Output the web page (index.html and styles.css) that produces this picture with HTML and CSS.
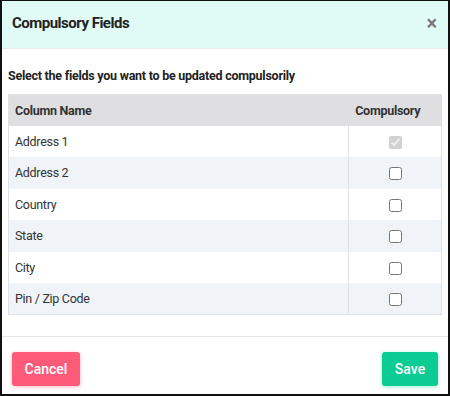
FILE: index.html
```html
<!DOCTYPE html>
<html>
<head>
<meta charset="utf-8">
<link rel="stylesheet" href="styles.css">
</head>
<body>
<div class="modal">
  <div class="modal-header">
    <h2 class="title">Compulsory Fields</h2>
    <span class="close">&times;</span>
  </div>
  <div class="modal-body">
    <p class="lead">Select the fields you want to be updated compulsorily</p>
    <table class="fields">
      <thead>
        <tr><th class="name">Column Name</th><th class="chk">Compulsory</th></tr>
      </thead>
      <tbody>
        <tr><td class="name">Address 1</td><td class="chk"><input type="checkbox" checked disabled></td></tr>
        <tr><td class="name">Address 2</td><td class="chk"><input type="checkbox"></td></tr>
        <tr><td class="name">Country</td><td class="chk"><input type="checkbox"></td></tr>
        <tr><td class="name">State</td><td class="chk"><input type="checkbox"></td></tr>
        <tr><td class="name">City</td><td class="chk"><input type="checkbox"></td></tr>
        <tr><td class="name">Pin / Zip Code</td><td class="chk"><input type="checkbox"></td></tr>
      </tbody>
    </table>
  </div>
  <div class="modal-footer">
    <button class="btn btn-cancel">Cancel</button>
    <button class="btn btn-save">Save</button>
  </div>
</div>
</body>
</html>
```
FILE: styles.css
```css
* { box-sizing: border-box; }
html, body { margin: 0; padding: 0; background: #fff; }
body { font-family: Roboto, "Liberation Sans", sans-serif; color: #333; }

.modal {
  width: 450px;
  height: 396px;
  border: 2px solid #111;
  border-top-width: 1px;
  display: flex;
  flex-direction: column;
  background: #fff;
}

.modal-header {
  height: 48px;
  background: #e0faf5;
  border-bottom: 1px solid #e6ecec;
  display: flex;
  align-items: center;
  justify-content: space-between;
  padding: 0 10px 4px 10px;
}
.title {
  margin: 0;
  font-size: 15px;
  font-weight: 700;
  letter-spacing: -0.5px;
  color: #222;
}
.close {
  font-size: 20px;
  font-weight: 700;
  color: #777;
  line-height: 1;
  margin-right: 1px;
}

.modal-body {
  padding: 19px 6px 0 6px;
  flex: 1;
  border-bottom: 1px solid #e6e6e6;
}
.lead {
  margin: 0 0 11px 0;
  font-size: 12.5px;
  font-weight: 700;
  letter-spacing: -0.25px;
  color: #222;
}

.fields {
  width: 100%;
  border-collapse: collapse;
  border: 1px solid #dee2e6;
  font-size: 12.5px;
  letter-spacing: -0.3px;
}
.fields th {
  background: #dfdfe1;
  font-weight: 700;
  font-size: 12.5px;
  letter-spacing: -0.28px;
  height: 31px;
  color: #333;
}
.fields td {
  height: 31.5px;
  color: #333;
}
.fields th.name, .fields td.name { text-align: left; padding: 0 6px; }
.fields th.chk, .fields td.chk { text-align: center; width: 93px; padding: 0; }
.fields th.chk { padding-right: 14px; }
.fields td.chk { border-left: 1px solid #dee2e6; }
.fields tbody tr:nth-child(even) { background: #f0f3f8; }
.fields input { margin: 0; width: 13px; height: 13px; vertical-align: middle; }

.modal-footer {
  height: 57px;
  display: flex;
  align-items: flex-start;
  justify-content: space-between;
  padding: 15px 10px 0 10px;
}
.btn {
  height: 34px;
  border: none;
  border-radius: 3px;
  color: #fff;
  font-family: Roboto, "Liberation Sans", sans-serif;
  font-size: 14px;
  font-weight: 500;
}
.btn-cancel {
  width: 68px;
  background: #fe5a79;
  box-shadow: 0 1px 4px rgba(254, 90, 121, 0.4);
}
.btn-save {
  width: 56px;
  background: #0bcc92;
  box-shadow: 0 1px 4px rgba(11, 204, 146, 0.4);
}
```
